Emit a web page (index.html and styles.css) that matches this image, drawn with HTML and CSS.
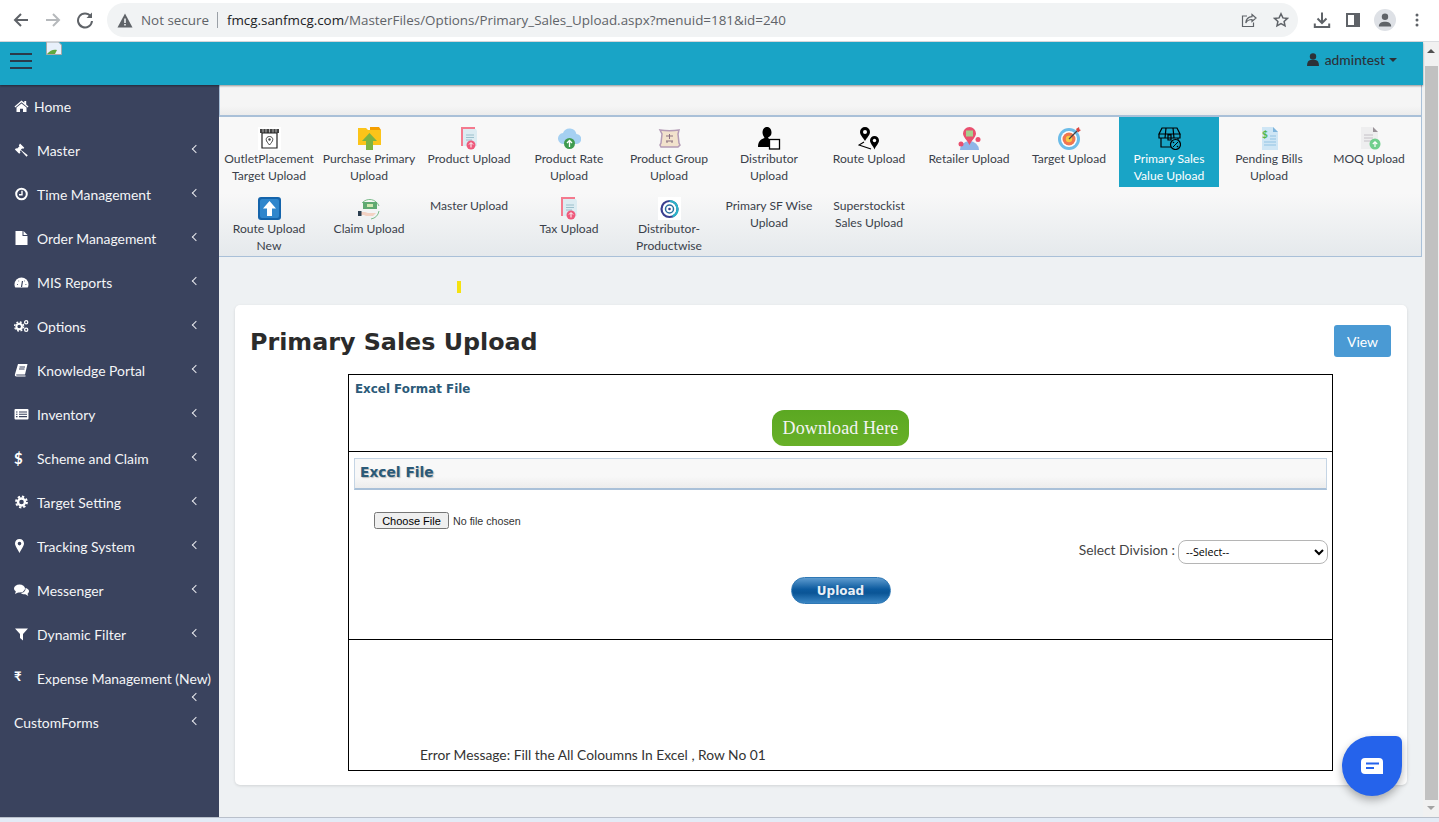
FILE: index.html
```html
<!DOCTYPE html>
<html lang="en">
<head>
  <meta charset="UTF-8">
  <title>Primary Sales Upload</title>
  <link rel="stylesheet" href="styles.css">
</head>
<body>
  <!-- browser toolbar -->
  <div class="chrome">
    <div class="nav-btns">
      <svg width="18" height="18" viewBox="0 0 18 18"><path d="M16 9H3.500M9 3 3 9l6 6" fill="none" stroke="#5f6368" stroke-width="2"/></svg>
      <svg width="18" height="18" viewBox="0 0 18 18"><path d="M2 9h12.500M9 3l6 6-6 6" fill="none" stroke="#b6b9bc" stroke-width="2"/></svg>
      <svg width="18" height="18" viewBox="0 0 18 18"><path d="M14.600 5.200A7 7 0 1 0 16 10" fill="none" stroke="#5f6368" stroke-width="2"/><path d="M16 1.500V7h-5.500z" fill="#5f6368"/></svg>
    </div>
    <div class="omnibox">
      <svg class="warn" width="16" height="15" viewBox="0 0 16 15"><path d="M8 .5 15.500 14.500H.5z" fill="#5f6368"/><path d="M7.200 5.500h1.600v4.500H7.200zM7.200 11h1.600v1.600H7.200z" fill="#f1f3f4"/></svg>
      <span class="not-secure">Not secure</span>
      <span class="url"><b>fmcg.sanfmcg.com</b>/MasterFiles/Options/Primary_Sales_Upload.aspx?menuid=181&amp;id=240</span>
      <svg class="omni-icon" width="16" height="16" viewBox="0 0 16 16"><path d="M11 2.500 15 6l-4 3.500V7.500C8 7.500 6 8.500 4.800 11 5 7.500 7 5 11 4.700zM12.500 10.500V14.500H1.500V4H6" fill="none" stroke="#5f6368" stroke-width="1.200"/></svg>
      <svg class="omni-icon" width="16" height="16" viewBox="0 0 16 16"><path d="m8 1.800 1.900 4.100 4.500.5-3.300 3 .9 4.400L8 11.600l-4 2.200.9-4.400-3.300-3 4.500-.5z" fill="none" stroke="#5f6368" stroke-width="1.500"/></svg>
    </div>
    <div class="chrome-right">
      <svg width="18" height="18" viewBox="0 0 18 18"><path d="M9 1.500v10M4.500 7.500 9 12l4.500-4.500M1.800 12.500v3.500h14.400v-3.500" fill="none" stroke="#5f6368" stroke-width="2"/></svg>
      <svg width="16" height="14" viewBox="0 0 16 14"><path d="M0 0h14v14H0zM2 2v10h6V2z" fill="#5f6368"/></svg>
      <span class="avatar"><svg width="14" height="14" viewBox="0 0 14 14"><circle cx="7" cy="3.800" r="3.200" fill="#5f6368"/><path d="M.8 13.500c0-3.500 3-4.800 6.200-4.800s6.200 1.300 6.200 4.800z" fill="#5f6368"/></svg></span>
      <svg width="4" height="14" viewBox="0 0 4 14"><circle cx="2" cy="2" r="1.500" fill="#5f6368"/><circle cx="2" cy="7" r="1.500" fill="#5f6368"/><circle cx="2" cy="12" r="1.500" fill="#5f6368"/></svg>
    </div>
  </div>

  <div class="window">
    <div class="app">
      <div class="topbar">
        <div class="burger"><span></span><span></span><span></span></div>
        <svg class="broken-img" width="16" height="13" viewBox="0 0 16 13"><path d="M.5 0v12.500h15V3l-3-3z" fill="#e8f0fb" stroke="#a8a8a8"/><path d="M1 12c3-4 7-5 10-4l-2 4z" fill="#5fa83f"/></svg>
        <div class="user">
          <svg width="12" height="13" viewBox="0 0 12 13"><circle cx="6" cy="3.500" r="3.200" fill="#2c3138"/><path d="M0 13c0-4 1.500-6 3.500-6h5c2 0 3.500 2 3.500 6z" fill="#2c3138"/></svg>
          <span>admintest</span>
          <i class="caret"></i>
        </div>
      </div>

      <div class="below">
        <ul class="sidebar">
          <li class="home">
            <svg class="ico" viewBox="0 0 14 14"><path d="M7 1.500 0 7.500l.8 1L7 3.300l6.200 5.200.8-1-2.300-2V2H9.800v1.800zM2 8.600 7 4.500l5 4.100V13H8.500V9.800h-3V13H2z" fill="#fff"/></svg>
            Home
          </li>
          <li>
            <svg class="ico" viewBox="0 0 14 14"><path d="M5.500.5 9.800 4.800 8.500 6l-.7-.7-1.500 1.500 7 5.500-1.300 1.500-5.800-6.600L5.300 8.700l.7.7-1.300 1.300L.4 6.400l1.300-1.300.7.7L5 3.200l-.7-.7z" fill="#fff"/></svg>
            Master<i class="chev"></i>
          </li>
          <li>
            <svg class="ico" viewBox="0 0 14 14"><circle cx="7" cy="7" r="5.300" fill="none" stroke="#fff" stroke-width="2"/><path d="M7.500 3.800v3.900H4.500" fill="none" stroke="#fff" stroke-width="1.400"/></svg>
            Time Management<i class="chev"></i>
          </li>
          <li>
            <svg class="ico" viewBox="0 0 14 14"><path d="M1 0h7v5h5v9H1zM9 0l4 4H9z" fill="#fff"/></svg>
            Order Management<i class="chev"></i>
          </li>
          <li>
            <svg class="ico" viewBox="0 0 14 14"><path d="M7 2.500A7 7 0 0 0 0 9.500c0 1.200.3 2.200.8 3h12.400c.5-.8.800-1.800.8-3a7 7 0 0 0-7-7z" fill="#fff"/><path d="M7 12 8 6M2.500 9.500h.8M11 9.500h.8M4 6h.6M9.800 6h.6" stroke="#3a435e" stroke-width="1.200" fill="none"/></svg>
            MIS Reports<i class="chev"></i>
          </li>
          <li>
            <svg class="ico" viewBox="0 0 16 14"><circle cx="5.500" cy="7.500" r="3" fill="none" stroke="#fff" stroke-width="2.200"/><circle cx="5.500" cy="7.500" r="4.800" fill="none" stroke="#fff" stroke-width="1.500" stroke-dasharray="2 1.800"/><circle cx="13" cy="3" r="1.700" fill="none" stroke="#fff" stroke-width="1.400"/><circle cx="13" cy="11" r="1.700" fill="none" stroke="#fff" stroke-width="1.400"/></svg>
            Options<i class="chev"></i>
          </li>
          <li>
            <svg class="ico" viewBox="0 0 14 14"><path d="M3.500 1H13l-2.500 10.500H2.500c-.8 0-1 .4-1 .6 0 .3.300.4 1 .4h8.500v1H2C.7 13.500.2 12.800.4 11.500z" fill="#fff"/><path d="M5 4h5.500M4.500 6h5.500" stroke="#3a435e"/></svg>
            Knowledge Portal<i class="chev"></i>
          </li>
          <li>
            <svg class="ico" viewBox="0 0 15 14"><rect x=".5" y="2" width="14" height="10.500" rx="1" fill="#fff"/><path d="M5 5h8M5 7.300h8M5 9.600h8M2 5h1.500M2 7.300h1.500M2 9.600h1.500" stroke="#3a435e" stroke-width="1.100"/></svg>
            Inventory<i class="chev"></i>
          </li>
          <li><span class="ico glyph">$</span>Scheme and Claim<i class="chev"></i></li>
          <li>
            <svg class="ico" viewBox="0 0 14 14"><circle cx="7" cy="7" r="3.500" fill="none" stroke="#fff" stroke-width="2.400"/><circle cx="7" cy="7" r="5.400" fill="none" stroke="#fff" stroke-width="2" stroke-dasharray="2.300 1.900"/></svg>
            Target Setting<i class="chev"></i>
          </li>
          <li>
            <svg class="ico" viewBox="0 0 14 14"><path d="M5 0C2.300 0 .5 2 .5 4.500.5 7 3.500 11 5 14c1.500-3 4.500-7 4.500-9.500C9.500 2 7.700 0 5 0zm0 2.800a1.800 1.800 0 1 1 0 3.600 1.800 1.800 0 0 1 0-3.600z" fill="#fff"/></svg>
            Tracking System<i class="chev"></i>
          </li>
          <li>
            <svg class="ico" viewBox="0 0 15 14"><ellipse cx="5.500" cy="5.500" rx="5.500" ry="4" fill="#fff"/><path d="m2 8-1 3 4-2z" fill="#fff"/><path d="M12 5c2 .8 3 2 3 3.300 0 1-.6 1.800-1.500 2.400l.8 2.300-3-1.700c-1.800.2-3.500-.3-4.500-1.300 2.800-.2 5-1.800 4.700-5z" fill="#fff"/></svg>
            Messenger<i class="chev"></i>
          </li>
          <li>
            <svg class="ico" viewBox="0 0 14 14"><path d="M.5 1.500h13L8.500 7v6.500L5.500 11V7z" fill="#fff"/></svg>
            Dynamic Filter<i class="chev"></i>
          </li>
          <li><span class="ico glyph rupee">₹</span>Expense Management (New)<i class="chev low"></i></li>
          <li class="plain">CustomForms<i class="chev"></i></li>
        </ul>

        <div class="main">
          <div class="subbar"></div>
          <div class="tiles">
            <div class="tile">
              <svg class="tile-ico" viewBox="0 0 23 23"><rect width="23" height="23" fill="#fff"/><path d="M2 2h19v4H2z" fill="#444"/><path d="M5 2v4M8 2v4M11.500 2v4M15 2v4M18 2v4" stroke="#ddd" stroke-width=".7"/><path d="M4 6h15v15H4z" fill="none" stroke="#222" stroke-width="1.200"/><path d="M11.500 9.500c-2 0-3.300 1.300-3.300 3 0 1.800 2 3.800 3.300 5.500 1.300-1.700 3.300-3.700 3.300-5.500 0-1.700-1.300-3-3.300-3z" fill="none" stroke="#444"/><circle cx="11.500" cy="12.500" r="1.200" fill="#444"/></svg>
              OutletPlacement Target Upload
            </div>
            <div class="tile">
              <svg class="tile-ico" viewBox="0 0 23 23"><path d="M0 1h8l2 2h13v15H0z" fill="#fcc419"/><path d="M12 0h9l2 3H12z" fill="#f59f00"/><path d="M11.500 6 19 14h-4v9H8v-9H4z" fill="#7cb342"/></svg>
              Purchase Primary Upload
            </div>
            <div class="tile">
              <svg class="tile-ico" viewBox="0 0 23 23"><path d="M3 0h14v3H5v16H3z" fill="#f47a8e"/><path d="M5 2h13l1 2v15H5z" fill="#dcecf2"/><path d="M8 8h8M8 10.500h8M8 13h6" stroke="#9cc0cc"/><circle cx="13" cy="18" r="4.500" fill="#ee5a7c"/><path d="M13 20.500V16M11 17.500l2-2 2 2" stroke="#fff" fill="none"/></svg>
              Product Upload
            </div>
            <div class="tile">
              <svg class="tile-ico" viewBox="0 0 23 23"><path d="M6 17a5.500 5.500 0 0 1-1-11 7 7 0 0 1 13.400 1A5 5 0 0 1 18 17z" fill="#a5d0f2"/><circle cx="11.500" cy="16.500" r="5.500" fill="#3e9b4f"/><path d="M11.500 20v-6M9 16l2.500-2.500L14 16" stroke="#fff" stroke-width="1.300" fill="none"/></svg>
              Product Rate Upload
            </div>
            <div class="tile">
              <svg class="tile-ico" viewBox="0 0 23 23"><path d="M2 3c6 1 13 1 19 0l-1 4 1 9 1 2-2 2H3l-1-2 1-2 1-9z" fill="#f2e2cc" stroke="#b49bb5" stroke-width="1.500"/><path d="M8 9h7M11.500 7v5M8 14h7M9 16v-2M14 16v-2" stroke="#8a7080"/></svg>
              Product Group Upload
            </div>
            <div class="tile">
              <svg class="tile-ico" viewBox="0 0 23 23"><path d="M9 0C6 0 4.500 2.500 4.500 5.500 4.500 8 6 9.500 6.500 11 3 12 0 14 0 20h11v-8l-1-1.500C12.500 9 13.500 8 13.500 5.500 13.500 2.500 12 0 9 0z" fill="#000"/><rect x="11.500" y="12.500" width="10" height="9.500" fill="#fff" stroke="#000" stroke-width="1.300"/></svg>
              Distributor Upload
            </div>
            <div class="tile">
              <svg class="tile-ico" viewBox="0 0 23 23"><path d="M7 0a5 5 0 0 0-5 5c0 3 3 5.500 5 9 2-3.500 5-6 5-9a5 5 0 0 0-5-5z" fill="#000"/><circle cx="7" cy="5" r="2" fill="#fff"/><path d="M16.500 9a4.500 4.500 0 0 0-4.500 4.500c0 3 3 5 4.500 9 1.500-4 4.500-6 4.500-9A4.500 4.500 0 0 0 16.500 9z" fill="#000"/><circle cx="16.500" cy="13.500" r="1.700" fill="#fff"/><path d="M6 15 1 18l12 4" fill="none" stroke="#000" stroke-width="1.200"/></svg>
              Route Upload
            </div>
            <div class="tile">
              <svg class="tile-ico" viewBox="0 0 23 23"><path d="M2 23a9.500 9 0 0 1 19 0z" fill="#8fb6e8"/><path d="M11.500 0a6.500 6.500 0 0 0-6.500 6.500C5 10 9 13 11.500 18 14 13 18 10 18 6.500A6.500 6.500 0 0 0 11.500 0z" fill="#e9506f"/><rect x="8" y="3.500" width="7" height="6" fill="#a5cf8e"/><circle cx="3" cy="17" r="2.500" fill="#e9506f"/><circle cx="20" cy="12.500" r="2.500" fill="#e9506f"/></svg>
              Retailer Upload
            </div>
            <div class="tile">
              <svg class="tile-ico" viewBox="0 0 23 23"><circle cx="11" cy="12" r="11" fill="#6cbce8"/><circle cx="11" cy="12" r="8" fill="#fff"/><circle cx="11" cy="12" r="6.500" fill="#f0764f"/><circle cx="11" cy="12" r="3.200" fill="#f6c945"/><path d="M11 12 20 3" stroke="#444" stroke-width="1.200"/><path d="m18 2 3-2 .5 2.500L23 3l-3 2.500z" fill="#d9443c"/></svg>
              Target Upload
            </div>
            <div class="tile active">
              <svg class="tile-ico" viewBox="0 0 23 23"><path d="M4 1h15l3 6H1zM1 7v4h21V7M3 11v9h10M20 11v2M8 1 7 11M15 1l1 10M10 8h3v5h-3z" fill="none" stroke="#000" stroke-width="1.200"/><circle cx="17.500" cy="17.500" r="5" fill="#19a4c6" stroke="#000" stroke-width="1.200"/><path d="m15 20 5-5" stroke="#000"/><circle cx="15.500" cy="15.500" r=".8"/><circle cx="19.500" cy="19.500" r=".8"/></svg>
              Primary Sales Value Upload
            </div>
            <div class="tile">
              <svg class="tile-ico" viewBox="0 0 23 23"><path d="M4 0h11l5 5v18H4z" fill="#cfe6f5"/><path d="M15 0v5h5z" fill="#7fb5dc"/><path d="M12 9h6M12 12h6M6 15h12M6 18h12" stroke="#92c3e3"/><text x="4" y="11" class="bill-sign">$</text></svg>
              Pending Bills Upload
            </div>
            <div class="tile">
              <svg class="tile-ico" viewBox="0 0 23 23"><path d="M3 0h12l5 5v17H3z" fill="#eeeeef"/><path d="M15 0v5h5z" fill="#9a9298"/><path d="M6 8h9M6 11h9M6 14h7" stroke="#c4c0c6"/><circle cx="17" cy="17" r="5.500" fill="#70cf8c"/><path d="M17 20v-5M14.800 17l2.200-2.200 2.200 2.200" stroke="#fff" stroke-width="1.200" fill="none"/></svg>
              MOQ Upload
            </div>
            <div class="tile">
              <svg class="tile-ico" viewBox="0 0 23 23"><rect width="23" height="23" rx="3" fill="#1464ab"/><rect x="2" y="2" width="19" height="19" rx="2" fill="#2f86cc"/><path d="M11.500 4 18 11.500h-4V19H9v-7.500H5z" fill="#fff"/></svg>
              Route Upload New
            </div>
            <div class="tile">
              <svg class="tile-ico" viewBox="0 0 23 23"><path d="M4 6a10 10 0 0 1 17 3M21 14a10 10 0 0 1-8 8" fill="none" stroke="#7dbd8c"/><rect x="5" y="5" width="14" height="7" fill="#5fa971"/><rect x="9" y="7" width="6" height="3" fill="#cfe8b0"/><path d="M3 15h4l3 1h8l-3 3H8l-2-1H3z" fill="#f3d2c4"/><rect x="0" y="14" width="3.500" height="5" fill="#2c3e50"/></svg>
              Claim Upload
            </div>
            <div class="tile">Master Upload</div>
            <div class="tile">
              <svg class="tile-ico" viewBox="0 0 23 23"><path d="M3 0h14v3H5v16H3z" fill="#f47a8e"/><path d="M5 2h13l1 2v15H5z" fill="#dcecf2"/><path d="M8 8h8M8 10.500h8M8 13h6" stroke="#9cc0cc"/><circle cx="13" cy="18" r="4.500" fill="#ee5a7c"/><path d="M13 20.500V16M11 17.500l2-2 2 2" stroke="#fff" fill="none"/></svg>
              Tax Upload
            </div>
            <div class="tile">
              <svg class="tile-ico" viewBox="0 0 23 23"><rect width="23" height="23" fill="#fff"/><circle cx="11.500" cy="12" r="8" fill="none" stroke="#3a3f8f" stroke-width="2.200"/><path d="M11.500 4a8 8 0 0 1 8 8 8 8 0 0 1-5 7.400" fill="none" stroke="#2bb4c8" stroke-width="2.200"/><circle cx="11.500" cy="12" r="4" fill="none" stroke="#2a6f9e" stroke-width="1.500"/><circle cx="11.500" cy="12" r="1.300" fill="#3a3f8f"/></svg>
              Distributor-Productwise
            </div>
            <div class="tile">Primary SF Wise Upload</div>
            <div class="tile">Superstockist Sales Upload</div>
          </div>

          <div class="yellow-mark"></div>

          <div class="card">
            <div class="card-head">
              <h1>Primary Sales Upload</h1>
              <button class="view-btn">View</button>
            </div>
            <div class="box">
              <div class="box-row format-row">
                <div class="format-label">Excel Format File</div>
                <div class="center"><a class="download-btn">Download Here</a></div>
              </div>
              <div class="box-row upload-row">
                <div class="excel-head">Excel File</div>
                <div class="file-line"><input type="file" class="file-input"></div>
                <div class="division-line">
                  <label>Select Division :</label>
                  <select class="division"><option>--Select--</option></select>
                </div>
                <div class="center"><button class="upload-btn">Upload</button></div>
              </div>
              <div class="box-row message-row">Error Message: Fill the All Coloumns In Excel , Row No 01</div>
            </div>
          </div>
        </div>
      </div>
    </div>

    <div class="scrollbar">
      <i class="arrow-up"></i>
      <div class="thumb"></div>
      <i class="arrow-down"></i>
    </div>
  </div>
  <div class="taskbar"></div>

  <!-- chat launcher -->
  <div class="chat-btn">
    <svg width="24" height="18" viewBox="0 0 24 18"><path d="M5 1h14a4 4 0 0 1 4 4v12H5a4 4 0 0 1-4-4V5a4 4 0 0 1 4-4z" fill="#fff"/><path d="M6 6.500h13M6 11h8" stroke="#2563eb" stroke-width="2"/></svg>
  </div>
</body>
</html>
```

FILE: styles.css
```css
* {
  box-sizing: border-box;
}
html, body {
  margin: 0;
  height: 822px;
  overflow: hidden;
}
body {
  font-family: Lato, "Liberation Sans", sans-serif;
  font-size: 14px;
  color: #333;
  position: relative;
}

/* browser toolbar */
.chrome {
  height: 42px;
  background: #fff;
  border-bottom: 1px solid #dadce0;
  display: flex;
  align-items: center;
  padding-bottom: 1px;
}
.nav-btns {
  display: flex;
  align-items: center;
  gap: 14px;
  padding-left: 12px;
  width: 107px;
}
.omnibox {
  width: 1191px;
  height: 34px;
  background: #f1f3f4;
  border-radius: 17px;
  display: flex;
  align-items: center;
  padding-left: 10px;
  font-family: "Open Sans", "Noto Sans", sans-serif;
  font-size: 13.4px;
  color: #5f6368;
}
.warn {
  margin-right: 8px;
}
.not-secure {
  padding-right: 8px;
  margin-right: 9px;
  border-right: 1px solid #9aa0a6;
  line-height: 16px;
}
.url {
  flex: 1;
  white-space: nowrap;
}
.url b {
  font-weight: 400;
  color: #202124;
}
.omni-icon {
  margin-right: 16px;
}
.omni-icon + .omni-icon {
  margin-right: 9px;
}
.chrome-right {
  display: flex;
  align-items: center;
  padding-left: 15px;
  gap: 15px;
}
.avatar {
  width: 22px;
  height: 22px;
  margin: 0 4px 0 -3px;
  border-radius: 50%;
  background: #dee1e6;
  display: flex;
  align-items: center;
  justify-content: center;
}

/* window */
.window {
  height: 775px;
  display: flex;
}
.app {
  width: 1423px;
  display: flex;
  flex-direction: column;
}
.scrollbar {
  width: 16px;
  background: #f1f1f1;
  display: flex;
  flex-direction: column;
  align-items: center;
  padding-top: 7px;
}
.arrow-up {
  border: 4px solid transparent;
  border-top: 0;
  border-bottom: 4px solid #505050;
  margin-bottom: 13px;
}
.thumb {
  width: 13px;
  height: 734px;
  background: #c1c1c1;
}
.arrow-down {
  border: 4px solid transparent;
  border-bottom: 0;
  border-top: 4px solid #a3a3a3;
  margin-top: 6px;
}
.taskbar {
  height: 5px;
  background: #e3ebf6;
  border-top: 1px solid #b9c0cb;
}

/* top bar */
.topbar {
  height: 43px;
  background: #19a4c6;
  display: flex;
  align-items: flex-start;
  box-shadow: 0 1px 2px rgba(0, 0, 0, .4);
  position: relative;
}
.burger {
  margin: 11px 0 0 10px;
  width: 22px;
}
.burger span {
  display: block;
  height: 2px;
  background: #2b3a4a;
  margin-bottom: 5px;
}
.broken-img {
  margin-left: 14px;
}
.user {
  margin-left: auto;
  margin-right: 26px;
  margin-top: 9px;
  display: flex;
  align-items: center;
  gap: 6px;
  font-size: 13.8px;
  font-weight: 500;
  color: #2c3138;
  line-height: 17px;
}
.caret {
  border: 4px solid transparent;
  border-bottom: 0;
  border-top: 4px solid #2c3138;
  margin-left: -2px;
}

.below {
  flex: 1;
  display: flex;
  min-height: 0;
}

/* side menu */
.sidebar {
  width: 219px;
  margin: 0;
  padding: 0;
  list-style: none;
  background: #3a435e;
  color: #f4f5f7;
}
.sidebar li {
  height: 44px;
  display: flex;
  align-items: center;
  padding: 0 0 2px 14px;
  position: relative;
  font-size: 13.9px;
  white-space: nowrap;
}
.ico {
  width: 15px;
  height: 14px;
  margin-right: 8px;
  flex: none;
}
.sidebar .home .ico {
  margin-right: 5px;
}
.glyph {
  font-size: 15px;
  font-weight: 700;
  line-height: 14px;
  color: #fff;
}
.rupee {
  font-size: 13px;
  margin-top: -4px;
}
.chev {
  position: absolute;
  left: 193px;
  top: 17px;
  width: 6px;
  height: 6px;
  border-left: 1.5px solid #e8e9ee;
  border-bottom: 1.5px solid #e8e9ee;
  transform: rotate(45deg);
}
.chev.low {
  top: 37px;
}

/* upload toolbar */
.main {
  width: 1204px;
  background: #eef1f3;
}
.subbar {
  height: 32px;
  margin-right: 1px;
  background: linear-gradient(#f5f5f5 70%, #ececec);
  border: 1px solid #a9c0d8;
  border-width: 0 1px 2px 1px;
}
.tiles {
  height: 140px;
  margin-right: 1px;
  display: grid;
  grid-template-columns: repeat(12, 100px);
  grid-auto-rows: 70px;
  background: linear-gradient(#f8f8f8 55%, #e5e9ec);
  border: 1px solid #a9c0d8;
  border-top: 0;
  border-left: 0;
}
.tile {
  padding: 10px 3px 0;
  text-align: center;
  font-size: 12.1px;
  line-height: 17px;
  color: #3a3f4a;
}
.tile-ico {
  display: block;
  width: 23px;
  height: 23px;
  margin: 0 auto;
}
.tile.active {
  background: #19a4c6;
  color: #fff;
}
.bill-sign {
  font-size: 10px;
  font-weight: 700;
  fill: #4fb648;
}
.yellow-mark {
  width: 4px;
  height: 12px;
  margin: 24px 0 12px 238px;
  background: #f5e20f;
}

/* card */
.card {
  width: 1172px;
  height: 480px;
  margin-left: 16px;
  background: #fff;
  border-radius: 5px;
  box-shadow: 0 1px 3px rgba(0, 0, 0, .12);
}
.card-head {
  height: 69px;
  display: flex;
  justify-content: space-between;
  align-items: flex-start;
  padding: 20px 16px 0 15px;
}
.card-head h1 {
  margin: 0;
  font-family: "DejaVu Sans", sans-serif;
  font-size: 23.8px;
  line-height: 34px;
  color: #2b2b2b;
}
.view-btn {
  width: 57px;
  height: 32px;
  border: 0;
  border-radius: 3px;
  background: #4a9ad4;
  color: #fff;
  font-family: Lato, sans-serif;
  font-size: 14px;
}
.box {
  width: 985px;
  height: 397px;
  margin-left: 113px;
  border: 1px solid #000;
  display: flex;
  flex-direction: column;
}
.box-row {
  border-bottom: 1px solid #000;
}
.format-row {
  height: 77px;
  padding-top: 6px;
}
.format-label {
  padding-left: 6px;
  height: 16px;
  font-family: "DejaVu Sans", sans-serif;
  font-size: 11.9px;
  font-weight: 700;
  line-height: 16px;
  color: #2b5a78;
}
.center {
  display: flex;
  justify-content: center;
}
.download-btn {
  width: 137px;
  height: 36px;
  margin-top: 13px;
  border-radius: 12px;
  background: linear-gradient(#5ba822, #68b028);
  color: #f4f4f4;
  text-align: center;
  font-family: "Liberation Serif", serif;
  font-size: 18px;
  letter-spacing: .1px;
  line-height: 36px;
}
.upload-row {
  height: 188px;
  padding-top: 6px;
}
.excel-head {
  height: 32px;
  margin: 0 5px;
  padding-left: 5px;
  background: linear-gradient(#f8f8f8 60%, #ececec);
  border: 1px solid #c5d5e5;
  border-bottom: 2px solid #a9c0d8;
  font-family: "DejaVu Sans", sans-serif;
  font-size: 13.8px;
  font-weight: 700;
  line-height: 26px;
  color: #2b5a78;
  text-shadow: 1px 1px 1px #bbb;
}
.file-line {
  margin-top: 22px;
  padding-left: 25px;
  height: 17px;
  display: flex;
}
.file-input {
  width: 200px;
  height: 17px;
  font-family: "Liberation Sans", sans-serif;
  font-size: 10.7px;
  line-height: 17px;
}
.file-input::file-selector-button {
  width: 75px;
  height: 17px;
  padding: 0;
  margin-right: 4px;
  font-size: 11px;
}
.division-line {
  margin-top: 11px;
  padding-right: 4px;
  display: flex;
  justify-content: flex-end;
  align-items: center;
  gap: 3px;
  font-size: 13.8px;
  color: #444;
}
.division-line label {
  margin-top: -6px;
}
.division {
  width: 150px;
  height: 24px;
  border: 1px solid #b5b5b5;
  border-radius: 8px;
  background: #fff;
  font-family: "Open Sans", sans-serif;
  font-size: 10.7px;
  padding-left: 3px;
}
.upload-btn {
  width: 100px;
  height: 27px;
  margin-top: 13px;
  border: 1px solid #2f78b5;
  border-radius: 14px;
  background: linear-gradient(#5d9bcf, #0c5a9e 45%, #0a5596 60%, #3a86c4);
  color: #e8eef5;
  font-family: "DejaVu Sans", sans-serif;
  font-size: 12px;
  font-weight: 700;
}
.message-row {
  flex: 1;
  border-bottom: 0;
  display: flex;
  align-items: flex-end;
  padding: 0 0 7px 71px;
  font-size: 13.8px;
  color: #333;
}

/* chat launcher */
.chat-btn {
  position: absolute;
  left: 1342px;
  top: 736px;
  width: 60px;
  height: 60px;
  background: #2563eb;
  border-radius: 50% 6px 50% 50%;
  box-shadow: 0 4px 8px rgba(0, 0, 0, .3);
  display: flex;
  align-items: center;
  justify-content: center;
}
```
